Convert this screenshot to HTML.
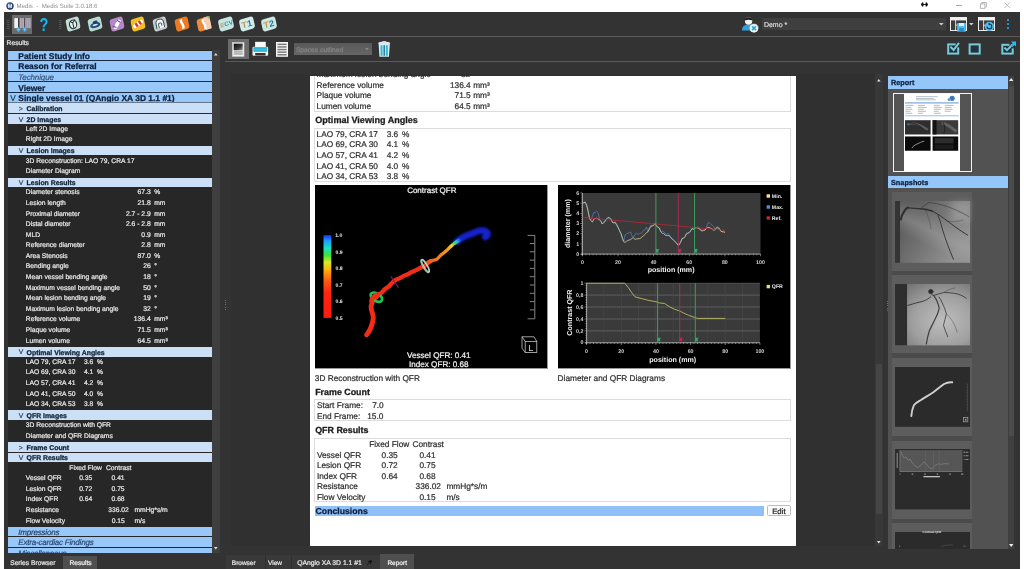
<!DOCTYPE html>
<html><head><meta charset="utf-8"><title>Medis - Medis Suite 3.0.18.6</title>
<style>
html,body{margin:0;padding:0;}
body{width:1024px;height:569px;overflow:hidden;background:#333;position:relative;font-family:'Liberation Sans',sans-serif;text-rendering:geometricPrecision;-webkit-font-smoothing:antialiased;}
.a{position:absolute;}
.t{position:absolute;white-space:pre;line-height:12px;}
.k{-webkit-text-stroke:0.22px currentColor;}
.kb{-webkit-text-stroke:0.28px currentColor;}
svg{position:absolute;overflow:visible;}
</style></head><body>
<div id="app" style="position:absolute;left:0;top:0;width:1024px;height:569px;overflow:hidden;will-change:transform">

<div class="a" style="left:0.00px;top:0.00px;width:1024.00px;height:12.30px;background:#ffffff;"></div>
<div class="a" style="left:0.00px;top:0.00px;width:4.20px;height:569.00px;background:#ffffff;"></div>
<div class="a" style="left:1020.00px;top:0.00px;width:4.00px;height:569.00px;background:#ffffff;"></div>
<svg style="left:6px;top:2.2px" width="8" height="8" viewBox="0 0 8 8"><defs><radialGradient id="tg" cx="0.4" cy="0.35" r="0.7"><stop offset="0" stop-color="#5878b8"/><stop offset="1" stop-color="#142a60"/></radialGradient></defs><circle cx="4" cy="4" r="3.7" fill="url(#tg)"/><text x="4" y="6" font-size="5.5" font-weight="bold" fill="#fff" text-anchor="middle" font-family="Liberation Sans, sans-serif">M</text></svg>
<span class="t k" style="top:1px;font-size:6.12px;color:#8e8e8e;left:16.60px;-webkit-text-stroke:0;">Medis  -  Medis Suite 3.0.18.6</span>
<svg style="left:921px;top:2.4px" width="7" height="5" viewBox="0 0 7 5"><path d="M0 2.5L2 0.6V4.4ZM7 2.5L5 0.6V4.4ZM1.5 2.5H5.5" fill="#111" stroke="#111" stroke-width="0.9"/></svg>
<div class="a" style="left:956.40px;top:4.90px;width:5.80px;height:0.80px;background:#a6a6a6;"></div>
<svg style="left:979.6px;top:2px" width="7" height="7" viewBox="0 0 7 7"><rect x="0.5" y="1.9" width="4.4" height="4.4" fill="none" stroke="#a6a6a6" stroke-width="0.8"/><path d="M1.8 1.9V0.5H6.4V5H4.9" fill="none" stroke="#a6a6a6" stroke-width="0.8"/></svg>
<svg style="left:1003.6px;top:2px" width="7" height="7" viewBox="0 0 7 7"><path d="M0.5 0.5L6 6M6 0.5L0.5 6" stroke="#b0b0b0" stroke-width="0.8"/></svg>
<div class="a" style="left:4.20px;top:12.30px;width:1015.80px;height:24.00px;background:#333333;"></div>
<div class="a" style="left:4.20px;top:36.20px;width:1015.80px;height:0.90px;background:#5a5a5a;"></div>
<svg style="left:6.6px;top:20px" width="3" height="10"><g fill="#545454"><rect x="0" y="0" width="2.4" height="1"/><rect x="0" y="2" width="2.4" height="1"/><rect x="0" y="4" width="2.4" height="1"/><rect x="0" y="6" width="2.4" height="1"/><rect x="0" y="8" width="2.4" height="1"/></g></svg>
<svg style="left:58.6px;top:20px" width="3" height="10"><g fill="#545454"><rect x="0" y="0" width="2.4" height="1"/><rect x="0" y="2" width="2.4" height="1"/><rect x="0" y="4" width="2.4" height="1"/><rect x="0" y="6" width="2.4" height="1"/><rect x="0" y="8" width="2.4" height="1"/></g></svg>
<div class="a" style="left:11.60px;top:14.60px;width:20.30px;height:19.80px;background:#6b6b6b;"></div>
<svg style="left:11.6px;top:14.6px" width="20.3" height="19.8" viewBox="11.6 14.6 20.3 19.8">
<rect x="13.9" y="17.7" width="3.8" height="10" fill="#f2f2f6"/>
<rect x="19.4" y="17.7" width="10.9" height="10" fill="#b4acb8"/>
<path d="M21.6 17.7V27.7M26.4 17.7V27.7M28.4 17.7V27.7" stroke="#8e8894" stroke-width="0.6"/>
<path d="M18.2 17.7V28M24.3 17.7V28" stroke="#3a3a3a" stroke-width="1"/>
<path d="M18.1 26.3L20.6 29.1L18.1 31.9L15.6 29.1Z" fill="#36a6e8"/>
<path d="M24.3 26.3L26.8 29.1L24.3 31.9L21.8 29.1Z" fill="#36a6e8"/>
<circle cx="18.1" cy="29.1" r="1.1" fill="#7ad0ff"/><circle cx="24.3" cy="29.1" r="1" fill="#7ad0ff"/>
</svg>
<span class="t" style="left:33.7px;width:20px;text-align:center;top:14px;font-size:18.6px;line-height:22px;color:#22b4e4;font-weight:bold;transform:scaleX(0.78);text-shadow:0.6px 0.6px 0 #123a6a">?</span>
<svg style="left:62.3px;top:13px" width="22" height="22" viewBox="-11 -11 22 22"><g transform="matrix(0.83,-0.25,0.17,0.79,0,0)"><rect x="-7.8" y="-7.8" width="15.6" height="15.6" rx="3.4" fill="#c2ddd2"/><ellipse cx="0" cy="0.5" rx="4.2" ry="5.2" fill="#e9f3ee" stroke="#25303a" stroke-width="1.3"/><path d="M-2.5 -4.5C-1 -1 1 -1 3 -5M0 -2V5" stroke="#25303a" stroke-width="1.2" fill="none"/></g></svg>
<svg style="left:84.2px;top:13px" width="22" height="22" viewBox="-11 -11 22 22"><g transform="matrix(0.83,-0.25,0.17,0.79,0,0)"><rect x="-7.8" y="-7.8" width="15.6" height="15.6" rx="3.4" fill="#badbcf"/><ellipse cx="0" cy="1.5" rx="6" ry="3.2" fill="#2a4a86"/><ellipse cx="0.5" cy="-1.5" rx="3" ry="2.4" fill="#1e3a78"/><ellipse cx="0" cy="1.2" rx="3.2" ry="1.1" fill="#dfeee8"/></g></svg>
<svg style="left:105.7px;top:13px" width="22" height="22" viewBox="-11 -11 22 22"><g transform="matrix(0.83,-0.25,0.17,0.79,0,0)"><rect x="-7.8" y="-7.8" width="15.6" height="15.6" rx="3.4" fill="#b487c6"/><path d="M-5 4.6L-1.6 -1L3 -5L5.6 -2.4L1.6 2L-2 6Z" fill="#fff"/><path d="M-5.4 1L-1.5 4M1 -4.4L4.4 -0.5" stroke="#6a3a88" stroke-width="1.1"/></g></svg>
<svg style="left:127.4px;top:13px" width="22" height="22" viewBox="-11 -11 22 22"><g transform="matrix(0.83,-0.25,0.17,0.79,0,0)"><rect x="-7.8" y="-7.8" width="15.6" height="15.6" rx="3.4" fill="#f3c11e"/><g transform="rotate(-20)"><rect x="-6.5" y="-2.6" width="13" height="5.2" rx="2.6" fill="#fff"/><rect x="-3.2" y="-2.6" width="2.6" height="5.2" fill="#d8322a"/><rect x="1.4" y="-2.6" width="2.6" height="5.2" fill="#d8322a"/></g></g></svg>
<svg style="left:149.3px;top:13px" width="22" height="22" viewBox="-11 -11 22 22"><g transform="matrix(0.83,-0.25,0.17,0.79,0,0)"><rect x="-7.8" y="-7.8" width="15.6" height="15.6" rx="3.4" fill="#c3cdcd"/><path d="M-4.5 5V-1.5A4.5 4.5 0 0 1 4.5 -1.5V5" fill="#f4f6f6" stroke="#3c4c58" stroke-width="1.2"/><path d="M-1.8 5V0.5A1.8 1.8 0 0 1 1.8 0.5V2.5" fill="none" stroke="#3c4c58" stroke-width="1.1"/></g></svg>
<svg style="left:171.2px;top:13px" width="22" height="22" viewBox="-11 -11 22 22"><g transform="matrix(0.83,-0.25,0.17,0.79,0,0)"><rect x="-7.8" y="-7.8" width="15.6" height="15.6" rx="3.4" fill="#ec7a22"/><path d="M-1.5 -6C-3.5 -2 1 0 -1 6L2 6C3.8 0 -0.5 -2 1.5 -6Z" fill="#fff"/></g></svg>
<svg style="left:193.2px;top:13px" width="22" height="22" viewBox="-11 -11 22 22"><g transform="matrix(0.83,-0.25,0.17,0.79,0,0)"><rect x="-7.8" y="-7.8" width="15.6" height="15.6" rx="3.4" fill="#ee8a3c"/><rect x="0.6" y="-7.8" width="7.2" height="15.6" fill="#f4cdb6"/><path d="M4 -7.8H7.8V-4Z" fill="#7cb85c"/><path d="M-1.6 -6.4C-3.6 -2 1 0 -1 6.6L1.8 6.6C3.6 0 -0.8 -2 1.2 -6.4Z" fill="#fff"/></g></svg>
<svg style="left:214.7px;top:13px" width="22" height="22" viewBox="-11 -11 22 22"><g transform="matrix(0.83,-0.25,0.17,0.79,0,0)"><rect x="-8.5" y="-7.5" width="17" height="15" rx="3.4" fill="#c6e6e4"/><text x="-7" y="2.6" font-size="7.4" font-weight="bold" fill="#c8a060" font-family="Liberation Sans, sans-serif">E<tspan fill="#3a88a8">CV</tspan></text></g></svg>
<svg style="left:236.1px;top:13px" width="22" height="22" viewBox="-11 -11 22 22"><g transform="matrix(0.83,-0.25,0.17,0.79,0,0)"><rect x="-8.5" y="-7.5" width="17" height="15" rx="3.4" fill="#d2ecea"/><text x="-6.4" y="3.8" font-size="10.6" font-weight="bold" fill="#c89858" font-family="Liberation Sans, sans-serif">T<tspan fill="#2a74a4">1</tspan></text></g></svg>
<svg style="left:257.8px;top:13px" width="22" height="22" viewBox="-11 -11 22 22"><g transform="matrix(0.83,-0.25,0.17,0.79,0,0)"><rect x="-8.5" y="-7.5" width="17" height="15" rx="3.4" fill="#cce8de"/><text x="-6.4" y="3.8" font-size="10.6" font-weight="bold" fill="#c89858" font-family="Liberation Sans, sans-serif">T<tspan fill="#2a74a4">2</tspan></text></g></svg>
<svg style="left:741px;top:16px" width="18" height="17" viewBox="0 0 18 17">
<path d="M1 14.5C1 10 4 8.6 7.6 8.6C11.2 8.6 14 10 14 14.5Z" fill="#2f9fe0"/>
<circle cx="7.6" cy="5" r="3.7" fill="#f2f2f2"/>
<path d="M3.7 4.6C3.7 0.2 11.5 0.2 11.5 4.6C9.5 3.6 6 3.6 3.7 4.6Z" fill="#1c1c1c"/>
<circle cx="13" cy="12.2" r="4" fill="#e4f4fa" stroke="#ffffff" stroke-width="0.8"/>
<path d="M11.1 10.3L14.9 14.1M14.9 10.3L11.1 14.1" stroke="#2aa6cc" stroke-width="1.5"/>
</svg>
<div class="a" style="left:761.60px;top:18.40px;width:184.00px;height:11.20px;background:#3f3f3f;"></div>
<span class="t k" style="top:20px;font-size:6.95px;color:#d8d8d8;left:764.00px;">Demo *</span>
<svg style="left:939px;top:23px" width="5" height="3"><path d="M0 0H4.6L2.3 2.6Z" fill="#ccc"/></svg>
<svg style="left:949.5px;top:16.5px" width="17" height="15" viewBox="0 0 17 15">
<rect x="0.5" y="0.5" width="16" height="13" fill="#3c3c3c" stroke="#ececec" stroke-width="1"/>
<rect x="1" y="1" width="15" height="2.4" fill="#f0f0f0"/>
<path d="M5.6 3V13.5M5.6 8.2H16" stroke="#ececec" stroke-width="0.9" fill="none"/>
<rect x="7.2" y="6" width="8.6" height="8.6" fill="#4fbff0"/>
<rect x="9" y="6" width="5" height="3" fill="#dff0fb"/>
<rect x="9.2" y="11" width="4.6" height="3.6" fill="#2a8ac0"/>
</svg>
<svg style="left:969px;top:23px" width="5" height="3"><path d="M0 0H4.6L2.3 2.6Z" fill="#ccc"/></svg>
<svg style="left:978px;top:16.5px" width="17" height="15" viewBox="0 0 17 15">
<rect x="0.5" y="0.5" width="16" height="13" fill="#3c3c3c" stroke="#ececec" stroke-width="1"/>
<rect x="1" y="1" width="15" height="2.4" fill="#f0f0f0"/>
<path d="M5.6 3V13.5M5.6 8.2H16" stroke="#ececec" stroke-width="0.9" fill="none"/>
<circle cx="11.4" cy="9.4" r="4.6" fill="#4fbff0"/>
<path d="M9 9.4A2.4 2.4 0 1 0 11.4 7" fill="none" stroke="#1a3c54" stroke-width="1.2"/>
<path d="M11.8 5.5L9.8 7.1L11.8 8.5Z" fill="#1a3c54"/>
</svg>
<div class="a" style="left:1006.60px;top:19.30px;width:2.20px;height:2.20px;background:#2f9fe0;border-radius:0.4px;"></div>
<div class="a" style="left:1006.60px;top:23.10px;width:2.20px;height:2.20px;background:#2f9fe0;border-radius:0.4px;"></div>
<div class="a" style="left:1006.60px;top:26.90px;width:2.20px;height:2.20px;background:#2f9fe0;border-radius:0.4px;"></div>
<div class="a" style="left:4.20px;top:37.10px;width:1015.80px;height:24.30px;background:#333333;"></div>
<div class="a" style="left:224.50px;top:61.30px;width:795.50px;height:0.90px;background:#5a5a5a;"></div>
<span class="t k" style="top:38px;font-size:6.7px;color:#e6e6e6;left:6.60px;">Results</span>
<div class="a" style="left:228.00px;top:39.20px;width:21.00px;height:20.30px;background:#6b6b6b;"></div>
<svg style="left:232.2px;top:41.6px" width="12.4" height="14.9" viewBox="0 0 13 15.4">
<rect x="0.4" y="0.4" width="12.2" height="14.6" fill="#f4f4f4" stroke="#d0d0d0" stroke-width="0.6"/>
<defs><linearGradient id="gi" x1="0" y1="0" x2="1" y2="1"><stop offset="0" stop-color="#0a0a0a"/><stop offset="0.6" stop-color="#3a3a3a"/><stop offset="1" stop-color="#9a9a9a"/></linearGradient></defs>
<rect x="1.8" y="1.6" width="9.4" height="7" fill="url(#gi)"/>
<rect x="1.8" y="9.8" width="9.4" height="1.1" fill="#888"/>
<rect x="1.8" y="11.9" width="9.4" height="1.1" fill="#888"/>
</svg>
<svg style="left:252px;top:41px" width="17" height="16" viewBox="252 41 17 16">
<defs><linearGradient id="pc" x1="0" y1="0" x2="0" y2="1"><stop offset="0" stop-color="#1a9cc8"/><stop offset="0.55" stop-color="#3cc4e6"/><stop offset="1" stop-color="#1f9fcc"/></linearGradient></defs>
<rect x="255.1" y="41.8" width="10.7" height="5.6" fill="#f6fafa"/>
<rect x="252.5" y="46.8" width="15.6" height="8.9" rx="1.2" fill="#f4f8f8"/>
<rect x="253.3" y="47.2" width="14" height="4.5" rx="0.8" fill="url(#pc)"/>
<rect x="255.2" y="53" width="10.4" height="2.5" fill="#3a2f2f"/>
</svg>
<svg style="left:276.2px;top:41.6px" width="12" height="15" viewBox="0 0 12 15">
<rect x="0" y="0" width="12" height="14.8" fill="#f6f6f6"/>
<g fill="#7c7c7c"><rect x="1.4" y="1.6" width="9.2" height="1.5"/><rect x="1.4" y="4.2" width="9.2" height="1.5"/><rect x="1.4" y="6.8" width="9.2" height="1.5"/><rect x="1.4" y="9.4" width="9.2" height="1.5"/><rect x="1.4" y="12" width="9.2" height="1.5"/></g>
</svg>
<div class="a" style="left:294.00px;top:43.40px;width:78.00px;height:11.50px;background:linear-gradient(#595959,#666666);"></div>
<span class="t k" style="top:45px;font-size:6.65px;color:#858585;left:295.90px;">Spaces outlined</span>
<svg style="left:364.6px;top:48.4px" width="5" height="3"><path d="M0 0H3.8L1.9 2.2Z" fill="#8a8a8a"/></svg>
<svg style="left:377.8px;top:41.2px" width="12.4" height="16" viewBox="0 0 12.4 16">
<ellipse cx="6.2" cy="2.2" rx="6" ry="1.7" fill="#e2e6e8"/>
<rect x="4.4" y="0" width="3.6" height="1.4" fill="#cfd4d6"/>
<path d="M0.6 3H11.8L11 15.8H1.4Z" fill="#d4eef6"/>
<rect x="2.6" y="4.2" width="1.9" height="10.6" fill="#2fb6d8"/>
<rect x="7.9" y="4.2" width="1.9" height="10.6" fill="#2fb6d8"/>
<rect x="5.5" y="4.2" width="1.4" height="10.6" fill="#2a6e90"/>
</svg>
<svg style="left:946px;top:41px" width="16" height="16" viewBox="946 41 16 16">
<rect x="948.2" y="44.4" width="10" height="9.2" fill="#27303c" stroke="#74ccd8" stroke-width="2"/>
<rect x="955.6" y="42" width="5" height="5.4" fill="#333333"/>
<path d="M950.4 46.8L953.6 50L959 42.8" fill="none" stroke="#74ccd8" stroke-width="2"/>
</svg>
<svg style="left:967px;top:41px" width="16" height="16" viewBox="967 41 16 16">
<rect x="969.6" y="44.4" width="10.1" height="9.2" fill="#27303c" stroke="#74ccd8" stroke-width="2"/>
</svg>
<svg style="left:1000px;top:40px" width="18" height="17" viewBox="1000 40 18 17">
<rect x="1002.3" y="44.8" width="10.4" height="8.8" fill="#27303c" stroke="#74ccd8" stroke-width="2"/>
<rect x="1009.4" y="42" width="6" height="6.4" fill="#333333"/>
<path d="M1004.4 47.6L1007 50.2L1012.4 44.6" fill="none" stroke="#74ccd8" stroke-width="1.9"/>
<path d="M1011 41.6H1016V46.6L1014.3 44.9L1012.2 47L1010.6 45.4L1012.7 43.3Z" fill="#34b8e2"/>
</svg>
<div class="a" style="left:7.80px;top:50.20px;width:204.40px;height:503.20px;background:#272727;"></div>
<div class="a" style="left:7.80px;top:50.50px;width:204.40px;height:52.60px;background:#1a2a40;"></div>
<div class="a" style="left:7.80px;top:50.50px;width:204.40px;height:9.50px;background:#98c8fa;"></div>
<span class="t kb" style="top:50px;font-size:8.45px;color:#0d2240;left:18.30px;font-weight:bold;">Patient Study Info</span>
<div class="a" style="left:7.80px;top:61.09px;width:204.40px;height:9.50px;background:#98c8fa;"></div>
<span class="t kb" style="top:60px;font-size:8.45px;color:#0d2240;left:18.30px;font-weight:bold;">Reason for Referral</span>
<div class="a" style="left:7.80px;top:71.68px;width:204.40px;height:9.50px;background:#98c8fa;"></div>
<span class="t k" style="top:72px;font-size:8.0px;color:#3a5880;left:18.30px;font-style:italic;letter-spacing:-0.12px;">Technique</span>
<div class="a" style="left:7.80px;top:82.26px;width:204.40px;height:9.50px;background:#98c8fa;"></div>
<span class="t kb" style="top:82px;font-size:8.45px;color:#0d2240;left:18.30px;font-weight:bold;">Viewer</span>
<div class="a" style="left:7.80px;top:92.85px;width:204.40px;height:9.50px;background:#98c8fa;"></div>
<span class="t k" style="top:93px;font-size:8.2px;color:#1f3a5c;left:10.30px;">V</span>
<span class="t kb" style="top:92px;font-size:8.45px;color:#0d2240;left:18.30px;font-weight:bold;">Single vessel 01 (QAngio XA 3D 1.1 #1)</span>
<div class="a" style="left:7.80px;top:102.35px;width:204.40px;height:1.10px;background:#66788c;"></div>
<div class="a" style="left:7.80px;top:103.44px;width:204.40px;height:9.60px;background:#cbdff6;"></div>
<span class="t k" style="top:104px;font-size:6.8px;color:#2c4763;left:18.80px;">&gt;</span>
<span class="t kb" style="top:104px;font-size:6.9px;color:#13253a;left:26.60px;font-weight:bold;">Calibration</span>
<div class="a" style="left:7.80px;top:114.03px;width:204.40px;height:9.60px;background:#cbdff6;"></div>
<span class="t k" style="top:115px;font-size:6.8px;color:#2c4763;left:18.80px;">V</span>
<span class="t kb" style="top:115px;font-size:6.9px;color:#13253a;left:26.60px;font-weight:bold;">2D Images</span>
<span class="t k" style="top:124px;font-size:6.72px;color:#e6e6e6;left:25.80px;">Left 2D Image</span>
<span class="t k" style="top:134px;font-size:6.72px;color:#e6e6e6;left:25.80px;">Right 2D Image</span>
<div class="a" style="left:7.80px;top:145.79px;width:204.40px;height:9.60px;background:#cbdff6;"></div>
<span class="t k" style="top:146px;font-size:6.8px;color:#2c4763;left:18.80px;">V</span>
<span class="t kb" style="top:146px;font-size:6.9px;color:#13253a;left:26.60px;font-weight:bold;">Lesion Images</span>
<span class="t k" style="top:156px;font-size:6.72px;color:#e6e6e6;left:25.80px;">3D Reconstruction: LAO 79, CRA 17</span>
<span class="t k" style="top:166px;font-size:6.72px;color:#e6e6e6;left:25.80px;">Diameter Diagram</span>
<div class="a" style="left:7.80px;top:177.56px;width:204.40px;height:9.60px;background:#cbdff6;"></div>
<span class="t k" style="top:178px;font-size:6.8px;color:#2c4763;left:18.80px;">V</span>
<span class="t kb" style="top:178px;font-size:6.9px;color:#13253a;left:26.60px;font-weight:bold;">Lesion Results</span>
<span class="t k" style="top:187px;font-size:6.72px;color:#e6e6e6;left:25.80px;">Diameter stenosis</span>
<span class="t k" style="top:187px;font-size:6.8px;color:#e6e6e6;right:873.20px;">67.3</span>
<span class="t k" style="top:187px;font-size:6.72px;color:#e6e6e6;left:154.20px;">%</span>
<span class="t k" style="top:198px;font-size:6.72px;color:#e6e6e6;left:25.80px;">Lesion length</span>
<span class="t k" style="top:198px;font-size:6.8px;color:#e6e6e6;right:873.20px;">21.8</span>
<span class="t k" style="top:198px;font-size:6.72px;color:#e6e6e6;left:154.20px;">mm</span>
<span class="t k" style="top:209px;font-size:6.72px;color:#e6e6e6;left:25.80px;">Proximal diameter</span>
<span class="t k" style="top:209px;font-size:6.8px;color:#e6e6e6;right:873.20px;">2.7 - 2.9</span>
<span class="t k" style="top:209px;font-size:6.72px;color:#e6e6e6;left:154.20px;">mm</span>
<span class="t k" style="top:219px;font-size:6.72px;color:#e6e6e6;left:25.80px;">Distal diameter</span>
<span class="t k" style="top:219px;font-size:6.8px;color:#e6e6e6;right:873.20px;">2.6 - 2.8</span>
<span class="t k" style="top:219px;font-size:6.72px;color:#e6e6e6;left:154.20px;">mm</span>
<span class="t k" style="top:230px;font-size:6.72px;color:#e6e6e6;left:25.80px;">MLD</span>
<span class="t k" style="top:230px;font-size:6.8px;color:#e6e6e6;right:873.20px;">0.9</span>
<span class="t k" style="top:230px;font-size:6.72px;color:#e6e6e6;left:154.20px;">mm</span>
<span class="t k" style="top:240px;font-size:6.72px;color:#e6e6e6;left:25.80px;">Reference diameter</span>
<span class="t k" style="top:240px;font-size:6.8px;color:#e6e6e6;right:873.20px;">2.8</span>
<span class="t k" style="top:240px;font-size:6.72px;color:#e6e6e6;left:154.20px;">mm</span>
<span class="t k" style="top:251px;font-size:6.72px;color:#e6e6e6;left:25.80px;">Area Stenosis</span>
<span class="t k" style="top:251px;font-size:6.8px;color:#e6e6e6;right:873.20px;">87.0</span>
<span class="t k" style="top:251px;font-size:6.72px;color:#e6e6e6;left:154.20px;">%</span>
<span class="t k" style="top:261px;font-size:6.72px;color:#e6e6e6;left:25.80px;">Bending angle</span>
<span class="t k" style="top:261px;font-size:6.8px;color:#e6e6e6;right:873.20px;">26</span>
<span class="t k" style="top:261px;font-size:6.72px;color:#e6e6e6;left:154.20px;">°</span>
<span class="t k" style="top:272px;font-size:6.72px;color:#e6e6e6;left:25.80px;">Mean vessel bending angle</span>
<span class="t k" style="top:272px;font-size:6.8px;color:#e6e6e6;right:873.20px;">18</span>
<span class="t k" style="top:272px;font-size:6.72px;color:#e6e6e6;left:154.20px;">°</span>
<span class="t k" style="top:283px;font-size:6.72px;color:#e6e6e6;left:25.80px;">Maximum vessel bending angle</span>
<span class="t k" style="top:283px;font-size:6.8px;color:#e6e6e6;right:873.20px;">50</span>
<span class="t k" style="top:283px;font-size:6.72px;color:#e6e6e6;left:154.20px;">°</span>
<span class="t k" style="top:293px;font-size:6.72px;color:#e6e6e6;left:25.80px;">Mean lesion bending angle</span>
<span class="t k" style="top:293px;font-size:6.8px;color:#e6e6e6;right:873.20px;">19</span>
<span class="t k" style="top:293px;font-size:6.72px;color:#e6e6e6;left:154.20px;">°</span>
<span class="t k" style="top:304px;font-size:6.72px;color:#e6e6e6;left:25.80px;">Maximum lesion bending angle</span>
<span class="t k" style="top:304px;font-size:6.8px;color:#e6e6e6;right:873.20px;">32</span>
<span class="t k" style="top:304px;font-size:6.72px;color:#e6e6e6;left:154.20px;">°</span>
<span class="t k" style="top:314px;font-size:6.72px;color:#e6e6e6;left:25.80px;">Reference volume</span>
<span class="t k" style="top:314px;font-size:6.8px;color:#e6e6e6;right:873.20px;">136.4</span>
<span class="t k" style="top:314px;font-size:6.72px;color:#e6e6e6;left:154.20px;">mm³</span>
<span class="t k" style="top:325px;font-size:6.72px;color:#e6e6e6;left:25.80px;">Plaque volume</span>
<span class="t k" style="top:325px;font-size:6.8px;color:#e6e6e6;right:873.20px;">71.5</span>
<span class="t k" style="top:325px;font-size:6.72px;color:#e6e6e6;left:154.20px;">mm³</span>
<span class="t k" style="top:336px;font-size:6.72px;color:#e6e6e6;left:25.80px;">Lumen volume</span>
<span class="t k" style="top:336px;font-size:6.8px;color:#e6e6e6;right:873.20px;">64.5</span>
<span class="t k" style="top:336px;font-size:6.72px;color:#e6e6e6;left:154.20px;">mm³</span>
<div class="a" style="left:7.80px;top:346.96px;width:204.40px;height:9.60px;background:#cbdff6;"></div>
<span class="t k" style="top:347px;font-size:6.8px;color:#2c4763;left:18.80px;">V</span>
<span class="t kb" style="top:348px;font-size:6.9px;color:#13253a;left:26.60px;font-weight:bold;">Optimal Viewing Angles</span>
<span class="t k" style="top:357px;font-size:6.72px;color:#e6e6e6;left:25.80px;">LAO 79, CRA 17</span>
<span class="t k" style="top:357px;font-size:6.72px;color:#e6e6e6;left:84.00px;">3.6</span>
<span class="t k" style="top:357px;font-size:6.72px;color:#e6e6e6;left:97.00px;">%</span>
<span class="t k" style="top:367px;font-size:6.72px;color:#e6e6e6;left:25.80px;">LAO 69, CRA 30</span>
<span class="t k" style="top:367px;font-size:6.72px;color:#e6e6e6;left:84.00px;">4.1</span>
<span class="t k" style="top:367px;font-size:6.72px;color:#e6e6e6;left:97.00px;">%</span>
<span class="t k" style="top:378px;font-size:6.72px;color:#e6e6e6;left:25.80px;">LAO 57, CRA 41</span>
<span class="t k" style="top:378px;font-size:6.72px;color:#e6e6e6;left:84.00px;">4.2</span>
<span class="t k" style="top:378px;font-size:6.72px;color:#e6e6e6;left:97.00px;">%</span>
<span class="t k" style="top:389px;font-size:6.72px;color:#e6e6e6;left:25.80px;">LAO 41, CRA 50</span>
<span class="t k" style="top:389px;font-size:6.72px;color:#e6e6e6;left:84.00px;">4.0</span>
<span class="t k" style="top:389px;font-size:6.72px;color:#e6e6e6;left:97.00px;">%</span>
<span class="t k" style="top:399px;font-size:6.72px;color:#e6e6e6;left:25.80px;">LAO 34, CRA 53</span>
<span class="t k" style="top:399px;font-size:6.72px;color:#e6e6e6;left:84.00px;">3.8</span>
<span class="t k" style="top:399px;font-size:6.72px;color:#e6e6e6;left:97.00px;">%</span>
<div class="a" style="left:7.80px;top:410.49px;width:204.40px;height:9.60px;background:#cbdff6;"></div>
<span class="t k" style="top:411px;font-size:6.8px;color:#2c4763;left:18.80px;">V</span>
<span class="t kb" style="top:411px;font-size:6.9px;color:#13253a;left:26.60px;font-weight:bold;">QFR Images</span>
<span class="t k" style="top:420px;font-size:6.72px;color:#e6e6e6;left:25.80px;">3D Reconstruction with QFR</span>
<span class="t k" style="top:431px;font-size:6.72px;color:#e6e6e6;left:25.80px;">Diameter and QFR Diagrams</span>
<div class="a" style="left:7.80px;top:442.26px;width:204.40px;height:9.60px;background:#cbdff6;"></div>
<span class="t k" style="top:443px;font-size:6.8px;color:#2c4763;left:18.80px;">&gt;</span>
<span class="t kb" style="top:443px;font-size:6.9px;color:#13253a;left:26.60px;font-weight:bold;">Frame Count</span>
<div class="a" style="left:7.80px;top:452.84px;width:204.40px;height:9.60px;background:#cbdff6;"></div>
<span class="t k" style="top:453px;font-size:6.8px;color:#2c4763;left:18.80px;">V</span>
<span class="t kb" style="top:453px;font-size:6.9px;color:#13253a;left:26.60px;font-weight:bold;">QFR Results</span>
<span class="t k" style="top:463px;font-size:6.72px;color:#e6e6e6;left:69.30px;">Fixed Flow</span>
<span class="t k" style="top:463px;font-size:6.72px;color:#e6e6e6;left:106.00px;">Contrast</span>
<span class="t k" style="top:473px;font-size:6.72px;color:#e6e6e6;left:25.80px;">Vessel QFR</span>
<span class="t k" style="top:473px;font-size:6.72px;color:#e6e6e6;right:931.80px;">0.35</span>
<span class="t k" style="top:473px;font-size:6.72px;color:#e6e6e6;right:899.40px;">0.41</span>
<span class="t k" style="top:484px;font-size:6.72px;color:#e6e6e6;left:25.80px;">Lesion QFR</span>
<span class="t k" style="top:484px;font-size:6.72px;color:#e6e6e6;right:931.80px;">0.72</span>
<span class="t k" style="top:484px;font-size:6.72px;color:#e6e6e6;right:899.40px;">0.75</span>
<span class="t k" style="top:494px;font-size:6.72px;color:#e6e6e6;left:25.80px;">Index QFR</span>
<span class="t k" style="top:494px;font-size:6.72px;color:#e6e6e6;right:931.80px;">0.64</span>
<span class="t k" style="top:494px;font-size:6.72px;color:#e6e6e6;right:899.40px;">0.68</span>
<span class="t k" style="top:505px;font-size:6.72px;color:#e6e6e6;left:25.80px;">Resistance</span>
<span class="t k" style="top:505px;font-size:6.72px;color:#e6e6e6;right:895.20px;">336.02</span>
<span class="t k" style="top:505px;font-size:6.72px;color:#e6e6e6;left:134.50px;">mmHg*s/m</span>
<span class="t k" style="top:516px;font-size:6.72px;color:#e6e6e6;left:25.80px;">Flow Velocity</span>
<span class="t k" style="top:516px;font-size:6.72px;color:#e6e6e6;right:899.20px;">0.15</span>
<span class="t k" style="top:516px;font-size:6.72px;color:#e6e6e6;left:134.50px;">m/s</span>
<div class="a" style="left:7.80px;top:526.60px;width:204.40px;height:9.50px;background:#98c8fa;"></div>
<span class="t k" style="top:527px;font-size:8.0px;color:#2c4a74;left:18.30px;font-style:italic;letter-spacing:-0.2px;">Impressions</span>
<div class="a" style="left:7.80px;top:537.30px;width:204.40px;height:9.50px;background:#98c8fa;"></div>
<span class="t k" style="top:537px;font-size:8.0px;color:#2c4a74;left:18.30px;font-style:italic;letter-spacing:-0.2px;">Extra-cardiac Findings</span>
<div class="a" style="left:7.80px;top:548.00px;width:204.40px;height:5.40px;background:#98c8fa;"></div>
<span class="t k" style="top:548px;font-size:8.0px;color:#2c4a74;left:18.30px;font-style:italic;letter-spacing:-0.2px;">Miscellaneous</span>
<div class="a" style="left:212.40px;top:50.20px;width:7.70px;height:503.20px;background:#3f3f3f;"></div>
<svg style="left:214.2px;top:52.6px" width="5" height="4"><path d="M0 2.4L1.8 0L3.6 2.4Z" fill="#e0e0e0"/></svg>
<svg style="left:214.2px;top:546.6px" width="5" height="4"><path d="M0 0L1.8 2.4L3.6 0Z" fill="#e0e0e0"/></svg>
<div class="a" style="left:224.90px;top:300.00px;width:0.80px;height:1.10px;background:#6e6e6e;"></div>
<div class="a" style="left:224.90px;top:302.20px;width:0.80px;height:1.10px;background:#6e6e6e;"></div>
<div class="a" style="left:224.90px;top:304.40px;width:0.80px;height:1.10px;background:#6e6e6e;"></div>
<div class="a" style="left:224.90px;top:306.60px;width:0.80px;height:1.10px;background:#6e6e6e;"></div>
<div class="a" style="left:224.90px;top:308.80px;width:0.80px;height:1.10px;background:#6e6e6e;"></div>
<div class="a" style="left:4.20px;top:553.40px;width:1015.80px;height:15.60px;background:#333333;"></div>
<span class="t k" style="top:558px;font-size:6.7px;color:#e6e6e6;left:10.20px;">Series Browser</span>
<div class="a" style="left:62.80px;top:556.00px;width:34.40px;height:13.00px;background:#4f4f4f;"></div>
<span class="t k" style="top:558px;font-size:6.7px;color:#f0f0f0;left:69.40px;">Results</span>
<div class="a" style="left:231.00px;top:73.60px;width:644.00px;height:472.40px;background:#303030;"></div>
<div class="a" style="left:310.40px;top:75.50px;width:486.00px;height:470.50px;background:#ffffff;"></div>
<div class="a" style="left:314px;top:75.5px;width:477.20000000000005px;height:36.099999999999994px;border:0.8px solid #dcdcdc;border-top:none;box-sizing:border-box"></div>
<span class="t k" style="top:68px;font-size:8.3px;color:#303030;left:316.60px;">Maximum lesion bending angle</span>
<span class="t k" style="top:68px;font-size:8.3px;color:#303030;left:461.00px;">32</span>
<span class="t k" style="top:68px;font-size:8.3px;color:#303030;left:473.20px;">°</span>
<div class="a" style="left:300.00px;top:62.20px;width:520.00px;height:12.80px;background:#333333;"></div>
<div class="a" style="left:231.00px;top:73.60px;width:644.00px;height:1.90px;background:#303030;"></div>
<span class="t k" style="top:79px;font-size:8.3px;color:#303030;left:316.60px;">Reference volume</span>
<span class="t k" style="top:79px;font-size:8.3px;color:#303030;right:553.30px;">136.4</span>
<span class="t k" style="top:79px;font-size:8.3px;color:#303030;left:473.20px;">mm³</span>
<span class="t k" style="top:89px;font-size:8.3px;color:#303030;left:316.60px;">Plaque volume</span>
<span class="t k" style="top:89px;font-size:8.3px;color:#303030;right:553.30px;">71.5</span>
<span class="t k" style="top:89px;font-size:8.3px;color:#303030;left:473.20px;">mm³</span>
<span class="t k" style="top:100px;font-size:8.3px;color:#303030;left:316.60px;">Lumen volume</span>
<span class="t k" style="top:100px;font-size:8.3px;color:#303030;right:553.30px;">64.5</span>
<span class="t k" style="top:100px;font-size:8.3px;color:#303030;left:473.20px;">mm³</span>
<span class="t kb" style="top:114px;font-size:9.05px;color:#1c1c1c;left:315.30px;font-weight:bold;">Optimal Viewing Angles</span>
<div class="a" style="left:314px;top:128px;width:477.20000000000005px;height:54.19999999999999px;border:0.8px solid #dcdcdc;box-sizing:border-box"></div>
<span class="t k" style="top:128px;font-size:8.3px;color:#303030;left:316.60px;">LAO 79, CRA 17</span>
<span class="t k" style="top:128px;font-size:8.3px;color:#303030;left:386.70px;">3.6</span>
<span class="t k" style="top:128px;font-size:8.3px;color:#303030;left:402.00px;">%</span>
<span class="t k" style="top:138px;font-size:8.3px;color:#303030;left:316.60px;">LAO 69, CRA 30</span>
<span class="t k" style="top:138px;font-size:8.3px;color:#303030;left:386.70px;">4.1</span>
<span class="t k" style="top:138px;font-size:8.3px;color:#303030;left:402.00px;">%</span>
<span class="t k" style="top:149px;font-size:8.3px;color:#303030;left:316.60px;">LAO 57, CRA 41</span>
<span class="t k" style="top:149px;font-size:8.3px;color:#303030;left:386.70px;">4.2</span>
<span class="t k" style="top:149px;font-size:8.3px;color:#303030;left:402.00px;">%</span>
<span class="t k" style="top:160px;font-size:8.3px;color:#303030;left:316.60px;">LAO 41, CRA 50</span>
<span class="t k" style="top:160px;font-size:8.3px;color:#303030;left:386.70px;">4.0</span>
<span class="t k" style="top:160px;font-size:8.3px;color:#303030;left:402.00px;">%</span>
<span class="t k" style="top:170px;font-size:8.3px;color:#303030;left:316.60px;">LAO 34, CRA 53</span>
<span class="t k" style="top:170px;font-size:8.3px;color:#303030;left:386.70px;">3.8</span>
<span class="t k" style="top:170px;font-size:8.3px;color:#303030;left:402.00px;">%</span>
<div class="a" style="left:314.60px;top:184.60px;width:233.50px;height:184.30px;background:#9a9a9a;"></div>
<div class="a" style="left:315.40px;top:185.40px;width:231.90px;height:182.70px;background:#000000;"></div>
<span class="t k" style="top:185px;font-size:8.0px;color:#f4f4f4;left:281.80px;width:300px;text-align:center;">Contrast QFR</span>
<svg style="left:315.4px;top:185.4px" width="231.89999999999998" height="182.70000000000002" viewBox="315.4 185.4 231.89999999999998 182.70000000000002">
<defs>
<linearGradient id="cb" x1="0" y1="0" x2="0" y2="1">
<stop offset="0" stop-color="#1a2cff"/><stop offset="0.07" stop-color="#1aa0ff"/><stop offset="0.16" stop-color="#19e0c0"/><stop offset="0.24" stop-color="#3be03a"/>
<stop offset="0.33" stop-color="#d8e820"/><stop offset="0.42" stop-color="#ffb010"/><stop offset="0.55" stop-color="#ff5a10"/><stop offset="0.7" stop-color="#ff2410"/><stop offset="1" stop-color="#ff1a10"/>
</linearGradient>
<linearGradient id="vs" gradientUnits="userSpaceOnUse" x1="426" y1="266" x2="461" y2="239">
<stop offset="0" stop-color="#f22c18"/><stop offset="0.1" stop-color="#f3541a"/><stop offset="0.3" stop-color="#f4781c"/><stop offset="0.62" stop-color="#f59a1c"/><stop offset="0.75" stop-color="#f2dc20"/><stop offset="0.83" stop-color="#48d860"/><stop offset="0.9" stop-color="#20b4e0"/><stop offset="1" stop-color="#1428d8"/>
</linearGradient>
<filter id="bl" x="-20%" y="-50%" width="140%" height="200%"><feGaussianBlur stdDeviation="0.9"/></filter>
</defs>
<rect x="323.9" y="235.5" width="7.8" height="82.8" fill="url(#cb)"/>
<g font-family="Liberation Sans, sans-serif" font-size="5.1" font-weight="bold" fill="#f0f0f0">
<text x="335.6" y="237.4">1.0</text><text x="336" y="254">0.9</text><text x="336" y="270.6">0.8</text><text x="336" y="287.2">0.7</text><text x="336" y="303.8">0.6</text><text x="336" y="320.4">0.5</text>
</g>
<g fill="none" stroke="url(#vs)" stroke-linecap="round" stroke-linejoin="round">
<path d="M367.1 335.3 C369.6 332 372.8 326 373.6 319 C374.2 314 370.8 311 371.6 306.4 C372.2 302.4 374 299.4 377 296.9" stroke-width="4.9"/>
<path d="M377 296.9 C380 294.2 381.6 294 383.6 291.4 C385.4 288.6 388 288.4 390.1 285.9 C391.6 283.6 393 282.6 394.5 281.5 C397 279 399.6 279.4 402.2 277.5 C404.6 275.4 407.2 275.6 409.9 273.8 C412.8 271.4 415.8 271.4 418.7 269.4 C421 267.8 423.2 267.6 425.3 266.1 C427.2 264.2 428.6 262.6 430.8 261.7" stroke-width="4.3"/>
<path d="M430.8 261.7 C433 260.2 435.6 260.8 437.4 259.5 C439.4 258 440 256.4 441.8 255.1 C443.8 253.6 445.4 252.4 447.2 250.7 C449 248.8 450.8 247 452.7 245.3 C454.2 244 455.6 243 457.1 242" stroke-width="3.3"/>
</g>
<path d="M457.1 242 C459.6 240 462 238.6 464.8 237.1 C467.8 235.4 470.6 234.4 473.6 233.6 C476.6 232.2 479.4 230.6 482.4 231 C485 230.8 487.4 231.8 487.9 233.6 C488.2 235.4 487 236.8 485.7 237.4" fill="none" stroke="#1224cc" stroke-width="6.6" stroke-linecap="round" stroke-linejoin="round" filter="url(#bl)"/>
<path d="M455 243.6 C457 242.2 458.8 240.8 460.6 239.6" fill="none" stroke="url(#vs)" stroke-width="3.6" stroke-linecap="round"/>
<ellipse cx="376.8" cy="297.6" rx="6.4" ry="3.8" transform="rotate(32 376.8 297.6)" fill="none" stroke="#22c254" stroke-width="2.7"/>
<path d="M371.8 301.2 C372.6 298 375 296.2 378.8 294.6" fill="none" stroke="#f22c18" stroke-width="4.6" stroke-linecap="round"/>
<ellipse cx="425.6" cy="266.4" rx="7.2" ry="2.1" transform="rotate(60 425.6 266.4)" fill="none" stroke="#9cbca6" stroke-width="1.7"/>
<ellipse cx="425.9" cy="266.2" rx="7.2" ry="1.5" transform="rotate(60 425.9 266.2)" fill="none" stroke="#e0ece0" stroke-width="0.6"/>
<path d="M391.2 276.7L398.9 288.1" stroke="#8c1f6c" stroke-width="1.1"/>
<g stroke="#bdbdbd" stroke-width="0.7" fill="none">
<path d="M528 235.8H535.2V319.2H528"/>
<path d="M530.2 243.9H534.8M530.2 252.2H534.8M530.2 260.5H534.8M530.2 268.8H534.8M530.2 277.1H534.8M530.2 285.4H534.8M530.2 293.7H534.8M530.2 302H534.8M530.2 310.3H534.8"/>
</g>
<g stroke="#c4c4c4" stroke-width="0.8" fill="none">
<rect x="525.6" y="341.8" width="11.6" height="11.2"/>
<path d="M525.6 341.8L522.4 337.2H534.4L537.2 341.8M522.4 337.2V348.6L525.6 353"/>
</g>
<text x="531.4" y="351" font-family="Liberation Sans, sans-serif" font-size="8.6" fill="#e0e0e0" text-anchor="middle">L</text>
</svg>
<span class="t k" style="top:350px;font-size:8.15px;color:#f4f4f4;left:288.80px;width:300px;text-align:center;">Vessel QFR: 0.41</span>
<span class="t k" style="top:359px;font-size:8.15px;color:#f4f4f4;left:288.80px;width:300px;text-align:center;">Index QFR: 0.68</span>
<div class="a" style="left:314.60px;top:368.10px;width:233.50px;height:0.80px;background:#9a9a9a;"></div>
<div class="a" style="left:313.40px;top:368.90px;width:235.90px;height:4.00px;background:#ffffff;"></div>
<span class="t k" style="top:372px;font-size:8.3px;color:#303030;left:314.80px;">3D Reconstruction with QFR</span>
<span class="t k" style="top:372px;font-size:8.3px;color:#303030;left:557.60px;">Diameter and QFR Diagrams</span>
<div class="a" style="left:557.50px;top:184.60px;width:233.30px;height:184.30px;background:#9a9a9a;"></div>
<div class="a" style="left:558.30px;top:185.40px;width:231.70px;height:182.70px;background:#000000;"></div>
<svg style="left:558.3px;top:185.4px" width="231.70000000000005" height="182.70000000000002" viewBox="558.3 185.4 231.70000000000005 182.70000000000002"><rect x="582.7" y="193.4" width="178.0999999999999" height="61.099999999999994" fill="#3a3a3a"/><rect x="586.9" y="283.6" width="173.30000000000007" height="59.599999999999966" fill="#3a3a3a"/><path d="M586.9 331.3H760.2" stroke="#b4b4b4" stroke-width="0.6" stroke-dasharray="1 1"/><path d="M586.9 319.4H760.2" stroke="#b4b4b4" stroke-width="0.6" stroke-dasharray="1 1"/><path d="M586.9 307.4H760.2" stroke="#b4b4b4" stroke-width="0.6" stroke-dasharray="1 1"/><path d="M586.9 295.5H760.2" stroke="#b4b4b4" stroke-width="0.6" stroke-dasharray="1 1"/><path d="M586.9 283.6H760.2" stroke="#b4b4b4" stroke-width="0.6" stroke-dasharray="1 1"/><path d="M604.2 283.6V343.2" stroke="#4c4c4c" stroke-width="0.5"/><path d="M621.6 283.6V343.2" stroke="#4c4c4c" stroke-width="0.5"/><path d="M638.9 283.6V343.2" stroke="#4c4c4c" stroke-width="0.5"/><path d="M656.2 283.6V343.2" stroke="#4c4c4c" stroke-width="0.5"/><path d="M673.5 283.6V343.2" stroke="#4c4c4c" stroke-width="0.5"/><path d="M690.9 283.6V343.2" stroke="#4c4c4c" stroke-width="0.5"/><path d="M708.2 283.6V343.2" stroke="#4c4c4c" stroke-width="0.5"/><path d="M725.5 283.6V343.2" stroke="#4c4c4c" stroke-width="0.5"/><path d="M742.9 283.6V343.2" stroke="#4c4c4c" stroke-width="0.5"/><path d="M582.7 193.4V256.0M581.2 254.5H760.8" stroke="#e0e0e0" stroke-width="0.7" fill="none"/><path d="M586.9 283.6V344.7M585.4 343.2H760.2" stroke="#e0e0e0" stroke-width="0.7" fill="none"/><path d="M580.5 254.5H582.7M581.5 252.5H582.7M581.5 250.4H582.7M581.5 248.4H582.7M581.5 246.4H582.7M580.5 244.3H582.7M581.5 242.3H582.7M581.5 240.2H582.7M581.5 238.2H582.7M581.5 236.2H582.7M580.5 234.1H582.7M581.5 232.1H582.7M581.5 230.1H582.7M581.5 228.0H582.7M581.5 226.0H582.7M580.5 223.9H582.7M581.5 221.9H582.7M581.5 219.9H582.7M581.5 217.8H582.7M581.5 215.8H582.7M580.5 213.8H582.7M581.5 211.7H582.7M581.5 209.7H582.7M581.5 207.7H582.7M581.5 205.6H582.7M580.5 203.6H582.7M581.5 201.5H582.7M581.5 199.5H582.7M581.5 197.5H582.7M581.5 195.4H582.7M580.5 193.4H582.7M582.7 254.5V256.7M586.3 254.5V255.7M589.8 254.5V255.7M593.4 254.5V255.7M596.9 254.5V255.7M600.5 254.5V255.7M604.1 254.5V255.7M607.6 254.5V255.7M611.2 254.5V255.7M614.8 254.5V255.7M618.3 254.5V256.7M621.9 254.5V255.7M625.4 254.5V255.7M629.0 254.5V255.7M632.6 254.5V255.7M636.1 254.5V255.7M639.7 254.5V255.7M643.3 254.5V255.7M646.8 254.5V255.7M650.4 254.5V255.7M653.9 254.5V256.7M657.5 254.5V255.7M661.1 254.5V255.7M664.6 254.5V255.7M668.2 254.5V255.7M671.8 254.5V255.7M675.3 254.5V255.7M678.9 254.5V255.7M682.4 254.5V255.7M686.0 254.5V255.7M689.6 254.5V256.7M693.1 254.5V255.7M696.7 254.5V255.7M700.2 254.5V255.7M703.8 254.5V255.7M707.4 254.5V255.7M710.9 254.5V255.7M714.5 254.5V255.7M718.1 254.5V255.7M721.6 254.5V255.7M725.2 254.5V256.7M728.7 254.5V255.7M732.3 254.5V255.7M735.9 254.5V255.7M739.4 254.5V255.7M743.0 254.5V255.7M746.6 254.5V255.7M750.1 254.5V255.7M753.7 254.5V255.7M757.2 254.5V255.7M760.8 254.5V256.7M584.7 343.2H586.9M585.7 340.8H586.9M585.7 338.4H586.9M585.7 336.0H586.9M585.7 333.7H586.9M584.7 331.3H586.9M585.7 328.9H586.9M585.7 326.5H586.9M585.7 324.1H586.9M585.7 321.7H586.9M584.7 319.4H586.9M585.7 317.0H586.9M585.7 314.6H586.9M585.7 312.2H586.9M585.7 309.8H586.9M584.7 307.4H586.9M585.7 305.1H586.9M585.7 302.7H586.9M585.7 300.3H586.9M585.7 297.9H586.9M584.7 295.5H586.9M585.7 293.1H586.9M585.7 290.8H586.9M585.7 288.4H586.9M585.7 286.0H586.9M584.7 283.6H586.9M586.9 343.2V345.4M590.4 343.2V344.4M593.8 343.2V344.4M597.3 343.2V344.4M600.8 343.2V344.4M604.2 343.2V344.4M607.7 343.2V344.4M611.2 343.2V344.4M614.6 343.2V344.4M618.1 343.2V344.4M621.6 343.2V345.4M625.0 343.2V344.4M628.5 343.2V344.4M632.0 343.2V344.4M635.4 343.2V344.4M638.9 343.2V344.4M642.4 343.2V344.4M645.8 343.2V344.4M649.3 343.2V344.4M652.8 343.2V344.4M656.2 343.2V345.4M659.7 343.2V344.4M663.2 343.2V344.4M666.6 343.2V344.4M670.1 343.2V344.4M673.5 343.2V344.4M677.0 343.2V344.4M680.5 343.2V344.4M683.9 343.2V344.4M687.4 343.2V344.4M690.9 343.2V345.4M694.3 343.2V344.4M697.8 343.2V344.4M701.3 343.2V344.4M704.7 343.2V344.4M708.2 343.2V344.4M711.7 343.2V344.4M715.1 343.2V344.4M718.6 343.2V344.4M722.1 343.2V344.4M725.5 343.2V345.4M729.0 343.2V344.4M732.5 343.2V344.4M735.9 343.2V344.4M739.4 343.2V344.4M742.9 343.2V344.4M746.3 343.2V344.4M749.8 343.2V344.4M753.3 343.2V344.4M756.7 343.2V344.4M760.2 343.2V345.4" stroke="#d8d8d8" stroke-width="0.5" fill="none"/><g font-family="Liberation Sans, sans-serif" font-size="5.3" font-weight="bold" fill="#d4d4d4"><text x="579.5" y="256.2" text-anchor="end">0</text><text x="579.5" y="246.0" text-anchor="end">1</text><text x="579.5" y="235.8" text-anchor="end">2</text><text x="579.5" y="225.6" text-anchor="end">3</text><text x="579.5" y="215.5" text-anchor="end">4</text><text x="579.5" y="205.3" text-anchor="end">5</text><text x="579.5" y="195.1" text-anchor="end">6</text><text x="582.7" y="264.1" text-anchor="middle">0</text><text x="586.9" y="353.4" text-anchor="middle">0</text><text x="618.3" y="264.1" text-anchor="middle">20</text><text x="621.6" y="353.4" text-anchor="middle">20</text><text x="653.9" y="264.1" text-anchor="middle">40</text><text x="656.2" y="353.4" text-anchor="middle">40</text><text x="689.6" y="264.1" text-anchor="middle">60</text><text x="690.9" y="353.4" text-anchor="middle">60</text><text x="725.2" y="264.1" text-anchor="middle">80</text><text x="725.5" y="353.4" text-anchor="middle">80</text><text x="760.8" y="264.1" text-anchor="middle">100</text><text x="760.2" y="353.4" text-anchor="middle">100</text><text x="583.6999999999999" y="344.9" text-anchor="end">0</text><text x="583.6999999999999" y="333.0" text-anchor="end">0,2</text><text x="583.6999999999999" y="321.1" text-anchor="end">0,4</text><text x="583.6999999999999" y="309.1" text-anchor="end">0,6</text><text x="583.6999999999999" y="297.2" text-anchor="end">0,8</text><text x="583.6999999999999" y="285.3" text-anchor="end">1</text></g><g font-family="Liberation Sans, sans-serif" font-size="7.1" font-weight="bold" fill="#f4f4f4" text-anchor="middle"><text x="671.4" y="272.6">position (mm)</text><text x="673" y="362.9">position (mm)</text><text transform="translate(569.8 224) rotate(-90)">diameter (mm)</text><text transform="translate(572.2 313) rotate(-90)">Contrast QFR</text></g><path d="M582.7 203.3 L584.1 203.1 L585.5 202.0 L587.0 205.7 L588.4 211.3 L589.8 218.3 L591.2 220.6 L592.7 216.9 L594.1 212.8 L595.5 212.9 L596.9 211.5 L598.4 213.3 L599.8 220.2 L601.2 221.7 L602.6 224.5 L604.1 221.8 L605.5 221.2 L606.9 219.0 L608.3 218.0 L609.8 218.3 L611.2 219.0 L612.6 222.0 L614.0 223.1 L615.5 222.1 L616.9 224.7 L618.3 226.8 L619.7 230.5 L621.2 233.8 L622.6 237.7 L624.0 241.6 L625.4 235.2 L626.9 234.1 L628.3 233.7 L629.7 232.9 L631.1 232.5 L632.6 237.2 L634.0 237.7 L635.4 234.7 L636.8 233.7 L638.3 234.7 L639.7 233.9 L641.1 233.8 L642.5 232.8 L644.0 230.8 L645.4 230.2 L646.8 227.4 L648.2 231.8 L649.7 228.3 L651.1 225.7 L652.5 226.0 L653.9 224.6 L655.4 224.0 L656.8 226.5 L658.2 227.2 L659.6 228.2 L661.1 231.8 L662.5 231.9 L663.9 231.7 L665.3 233.6 L666.8 234.8 L668.2 233.6 L669.6 235.2 L671.0 237.6 L672.5 238.7 L673.9 240.7 L675.3 241.9 L676.7 243.4 L678.2 245.6 L679.6 244.7 L681.0 241.6 L682.4 238.9 L683.9 238.2 L685.3 237.1 L686.7 233.3 L688.1 233.3 L689.6 233.1 L691.0 231.0 L692.4 228.9 L693.8 228.7 L695.3 228.3 L696.7 228.1 L698.1 227.5 L699.5 228.0 L701.0 230.4 L702.4 230.4 L703.8 230.0 L705.2 230.5 L706.7 227.5 L708.1 223.3 L709.5 223.0 L710.9 224.3 L712.4 225.6 L713.8 226.7 L715.2 229.5 L716.6 227.9 L718.1 226.8 L719.5 228.5 L720.9 231.2 L722.3 232.1 L723.8 231.6 L725.2 231.9" fill="none" stroke="#4a90d8" stroke-width="0.65"/><path d="M582.7 203.6 L584.1 203.2 L585.5 202.8 L587.0 205.6 L588.4 211.6 L589.8 218.8 L591.2 221.0 L592.7 222.6 L594.1 219.6 L595.5 218.9 L596.9 218.6 L598.4 219.5 L599.8 220.0 L601.2 221.9 L602.6 224.4 L604.1 222.9 L605.5 221.9 L606.9 219.4 L608.3 217.9 L609.8 218.4 L611.2 219.5 L612.6 222.7 L614.0 223.3 L615.5 223.0 L616.9 225.3 L618.3 228.0 L619.7 230.8 L621.2 233.8 L622.6 238.7 L624.0 242.1 L625.4 242.8 L626.9 241.6 L628.3 240.8 L629.7 240.4 L631.1 239.9 L632.6 238.5 L634.0 238.5 L635.4 239.8 L636.8 239.3 L638.3 239.2 L639.7 239.0 L641.1 238.6 L642.5 237.0 L644.0 236.0 L645.4 234.7 L646.8 232.9 L648.2 232.3 L649.7 229.4 L651.1 226.8 L652.5 226.4 L653.9 225.8 L655.4 224.0 L656.8 226.6 L658.2 227.7 L659.6 228.4 L661.1 232.2 L662.5 233.8 L663.9 233.7 L665.3 235.5 L666.8 235.9 L668.2 235.8 L669.6 236.2 L671.0 238.0 L672.5 239.5 L673.9 240.6 L675.3 241.9 L676.7 243.2 L678.2 245.6 L679.6 245.0 L681.0 242.7 L682.4 239.0 L683.9 238.6 L685.3 237.1 L686.7 234.6 L688.1 233.8 L689.6 233.0 L691.0 231.2 L692.4 228.9 L693.8 229.9 L695.3 228.4 L696.7 227.9 L698.1 228.8 L699.5 228.8 L701.0 230.8 L702.4 231.4 L703.8 231.0 L705.2 230.6 L706.7 228.8 L708.1 228.0 L709.5 227.7 L710.9 228.6 L712.4 229.2 L713.8 230.7 L715.2 230.4 L716.6 228.4 L718.1 228.1 L719.5 228.8 L720.9 231.3 L722.3 232.2 L723.8 232.3 L725.2 233.1" fill="none" stroke="#e8e0a8" stroke-width="0.7"/><path d="M582.7 217.8L725.2 230.6" stroke="#d02030" stroke-width="0.7"/><path d="M586.9 283.6 L625.0 283.6 L628.5 287.8 L632.0 293.1 L635.4 297.3 L642.4 299.1 L649.3 300.9 L656.2 302.1 L659.7 303.3 L664.9 303.9 L670.1 307.4 L675.3 309.8 L680.5 311.6 L683.9 313.4 L689.1 315.8 L694.3 317.6 L697.8 318.8 L725.5 318.8" fill="none" stroke="#cccc6c" stroke-width="0.8"/><path d="M656.2 193.4V254.5" stroke="#3aa862" stroke-width="0.9"/><path d="M656.2 249.5H659.6L658.4000000000001 251.1L659.2 252.9H656.2Z" fill="#3aa862"/><path d="M678.6 193.4V254.5" stroke="#b42a5c" stroke-width="0.9"/><path d="M678.6 249.5H682.0L680.8000000000001 251.1L681.6 252.9H678.6Z" fill="#b42a5c"/><path d="M694.9 193.4V254.5" stroke="#3aa862" stroke-width="0.9"/><path d="M694.9 249.5H698.3L697.1 251.1L697.9 252.9H694.9Z" fill="#3aa862"/><path d="M657.9 283.6V343.2" stroke="#3aa862" stroke-width="0.9"/><path d="M657.9 338.2H661.3L660.1 339.8L660.9 341.59999999999997H657.9Z" fill="#3aa862"/><path d="M680 283.6V343.2" stroke="#b42a5c" stroke-width="0.9"/><path d="M680 338.2H683.4L682.2 339.8L683 341.59999999999997H680Z" fill="#b42a5c"/><path d="M695.6 283.6V343.2" stroke="#3aa862" stroke-width="0.9"/><path d="M695.6 338.2H699.0L697.8000000000001 339.8L698.6 341.59999999999997H695.6Z" fill="#3aa862"/><g font-family="Liberation Sans, sans-serif" font-size="5.2" font-weight="bold" fill="#ececec"><rect x="766.9" y="194.70000000000002" width="3.4" height="3.4" fill="#f0e89a"/><text x="772.2" y="198.3">Min.</text><rect x="766.9" y="205.70000000000002" width="3.4" height="3.4" fill="#4a90d8"/><text x="772.2" y="209.3">Max.</text><rect x="766.9" y="216.70000000000002" width="3.4" height="3.4" fill="#d02030"/><text x="772.2" y="220.3">Ref.</text><rect x="766.9" y="285.3" width="3.4" height="3.4" fill="#e0e078"/><text x="772.2" y="288.9">QFR</text></g></svg>
<span class="t kb" style="top:386px;font-size:8.9px;color:#1c1c1c;left:315.20px;font-weight:bold;">Frame Count</span>
<div class="a" style="left:314px;top:398.9px;width:477.20000000000005px;height:22.5px;border:0.8px solid #dcdcdc;box-sizing:border-box"></div>
<span class="t k" style="top:399px;font-size:8.3px;color:#303030;left:316.90px;">Start Frame:</span>
<span class="t k" style="top:399px;font-size:8.3px;color:#303030;left:372.20px;">7.0</span>
<span class="t k" style="top:410px;font-size:8.3px;color:#303030;left:316.90px;">End Frame:</span>
<span class="t k" style="top:410px;font-size:8.3px;color:#303030;left:367.20px;">15.0</span>
<span class="t kb" style="top:424px;font-size:8.9px;color:#1c1c1c;left:315.20px;font-weight:bold;">QFR Results</span>
<div class="a" style="left:314px;top:438.2px;width:477.20000000000005px;height:64.30000000000001px;border:0.8px solid #dcdcdc;box-sizing:border-box"></div>
<span class="t k" style="top:438px;font-size:8.3px;color:#303030;left:369.20px;">Fixed Flow</span>
<span class="t k" style="top:438px;font-size:8.3px;color:#303030;left:412.50px;">Contrast</span>
<span class="t k" style="top:449px;font-size:8.3px;color:#303030;left:316.90px;">Vessel QFR</span>
<span class="t k" style="top:449px;font-size:8.3px;color:#303030;right:626.30px;">0.35</span>
<span class="t k" style="top:449px;font-size:8.3px;color:#303030;right:588.40px;">0.41</span>
<span class="t k" style="top:459px;font-size:8.3px;color:#303030;left:316.90px;">Lesion QFR</span>
<span class="t k" style="top:459px;font-size:8.3px;color:#303030;right:626.30px;">0.72</span>
<span class="t k" style="top:459px;font-size:8.3px;color:#303030;right:588.40px;">0.75</span>
<span class="t k" style="top:470px;font-size:8.3px;color:#303030;left:316.90px;">Index QFR</span>
<span class="t k" style="top:470px;font-size:8.3px;color:#303030;right:626.30px;">0.64</span>
<span class="t k" style="top:470px;font-size:8.3px;color:#303030;right:588.40px;">0.68</span>
<span class="t k" style="top:480px;font-size:8.3px;color:#303030;left:316.90px;">Resistance</span>
<span class="t k" style="top:480px;font-size:8.3px;color:#303030;right:583.00px;">336.02</span>
<span class="t k" style="top:480px;font-size:8.3px;color:#303030;left:446.40px;">mmHg*s/m</span>
<span class="t k" style="top:491px;font-size:8.3px;color:#303030;left:316.90px;">Flow Velocity</span>
<span class="t k" style="top:491px;font-size:8.3px;color:#303030;right:588.40px;">0.15</span>
<span class="t k" style="top:491px;font-size:8.3px;color:#303030;left:446.40px;">m/s</span>
<div class="a" style="left:315.30px;top:505.60px;width:448.70px;height:10.00px;background:#90c0f8;"></div>
<span class="t kb" style="top:505px;font-size:8.7px;color:#0d2240;left:315.60px;font-weight:bold;">Conclusions</span>
<div class="a" style="left:766.8px;top:505.2px;width:24.4px;height:10.4px;border:0.7px solid #bdbdbd;border-radius:1.4px;box-sizing:border-box;background:#fbfbfb"></div>
<span class="t k" style="top:506px;font-size:7.8px;color:#222;left:628.90px;width:300px;text-align:center;">Edit</span>
<div class="a" style="left:875.20px;top:73.60px;width:7.60px;height:472.40px;background:#383838;"></div>
<div class="a" style="left:875.60px;top:364.40px;width:6.80px;height:149.80px;background:#454545;"></div>
<svg style="left:876.9px;top:78.8px" width="5" height="4"><path d="M0 2.4L1.8 0L3.6 2.4Z" fill="#e0e0e0"/></svg>
<svg style="left:876.9px;top:540.8px" width="5" height="4"><path d="M0 0L1.8 2.4L3.6 0Z" fill="#e0e0e0"/></svg>
<div class="a" style="left:886.60px;top:301.00px;width:0.80px;height:1.10px;background:#6e6e6e;"></div>
<div class="a" style="left:886.60px;top:303.20px;width:0.80px;height:1.10px;background:#6e6e6e;"></div>
<div class="a" style="left:886.60px;top:305.40px;width:0.80px;height:1.10px;background:#6e6e6e;"></div>
<div class="a" style="left:886.60px;top:307.60px;width:0.80px;height:1.10px;background:#6e6e6e;"></div>
<div class="a" style="left:886.60px;top:309.80px;width:0.80px;height:1.10px;background:#6e6e6e;"></div>
<div class="a" style="left:888.20px;top:76.00px;width:119.80px;height:472.60px;background:#525252;"></div>
<div class="a" style="left:888.20px;top:76.00px;width:119.80px;height:12.70px;background:#95c6fa;"></div>
<span class="t kb" style="top:77px;font-size:7.3px;color:#0d2240;left:891.00px;font-weight:bold;">Report</span>
<div class="a" style="left:888.20px;top:175.70px;width:119.80px;height:12.30px;background:#95c6fa;"></div>
<span class="t kb" style="top:177px;font-size:7.3px;color:#0d2240;left:891.00px;font-weight:bold;">Snapshots</span>
<div class="a" style="left:892.50px;top:93.40px;width:79.70px;height:78.20px;background:#545454;border:1.4px solid #f4f4f4;box-sizing:border-box;"></div>
<div class="a" style="left:904.20px;top:94.40px;width:55.60px;height:76.20px;background:#ffffff;"></div>
<svg style="left:904.2px;top:94.2px" width="55.6" height="76.8" viewBox="0 0 56 77.4">
<g fill="#9aa8b8"><rect x="12" y="2.4" width="22" height="0.7"/><rect x="12" y="4" width="18" height="0.7"/><rect x="12" y="5.6" width="20" height="0.7"/></g>
<circle cx="48.5" cy="4.4" r="2.6" fill="#3a78c0"/><circle cx="45.4" cy="5.6" r="1.6" fill="#6aa0d8"/>
<rect x="1" y="8.6" width="54" height="0.8" fill="#3a78c0"/>
<g fill="#8a8a8a"><rect x="1.4" y="11" width="8" height="0.6"/><rect x="14" y="11" width="7" height="0.6"/><rect x="30" y="11" width="6" height="0.6"/><rect x="41" y="11" width="9" height="0.6"/>
<rect x="1.4" y="13" width="6" height="0.6"/><rect x="14" y="13" width="9" height="0.6"/><rect x="30" y="13" width="8" height="0.6"/><rect x="41" y="13" width="7" height="0.6"/>
<rect x="1.4" y="15" width="7" height="0.6"/><rect x="14" y="15" width="6" height="0.6"/><rect x="30" y="15" width="7" height="0.6"/><rect x="41" y="15" width="8" height="0.6"/>
<rect x="1.4" y="17" width="5" height="0.6"/><rect x="14" y="17" width="8" height="0.6"/><rect x="30" y="17" width="5" height="0.6"/><rect x="41" y="17" width="6" height="0.6"/>
<rect x="1.4" y="19" width="7" height="0.6"/><rect x="14" y="19" width="5" height="0.6"/><rect x="30" y="19" width="7" height="0.6"/></g>
<rect x="1" y="21.6" width="54" height="0.8" fill="#7ab0e8"/>
<rect x="1" y="26.4" width="25.8" height="14.4" fill="#2e2e2e"/><path d="M3 31C8 28 14 29 24 36" stroke="#6e6e6e" stroke-width="2.4" fill="none" opacity="0.7"/><path d="M5 29C10 29 15 31 19 35" stroke="#141414" stroke-width="0.7" fill="none"/>
<rect x="28.8" y="26.4" width="25.8" height="14.4" fill="#3a3a3a"/><rect x="28.8" y="26.4" width="4" height="14.4" fill="#141414"/><path d="M38 29C42 30 47 33 53 38" stroke="#7a7a7a" stroke-width="3" fill="none" opacity="0.6"/><path d="M39 28C41 31 42 35 40 40" stroke="#161616" stroke-width="0.7" fill="none"/>
<rect x="1" y="42.8" width="25.8" height="14.4" fill="#0a0a0a"/><path d="M8 54.6C9 52 12 51 15 49.6C17 48.6 19 47.6 20.4 47.6" stroke="#c8b0a8" stroke-width="0.8" fill="none"/>
<rect x="28.8" y="42.8" width="25.8" height="14.4" fill="#0a0a0a"/><rect x="31" y="44.4" width="19" height="5.4" fill="#2c2c2c"/><rect x="31" y="51" width="19" height="4.6" fill="#1c1c1c"/>
</svg>
<div class="a" style="left:892.40px;top:192.40px;width:79.70px;height:356.20px;background:#4b4b4b;"></div>
<div class="a" style="left:892.40px;top:192.40px;width:79.70px;height:78.40px;background:#5d5d5d;"></div>
<div class="a" style="left:892.40px;top:275.10px;width:79.70px;height:78.40px;background:#5d5d5d;"></div>
<div class="a" style="left:892.40px;top:357.80px;width:79.70px;height:78.40px;background:#5d5d5d;"></div>
<div class="a" style="left:892.40px;top:440.50px;width:79.70px;height:78.40px;background:#5d5d5d;"></div>
<div class="a" style="left:892.40px;top:523.20px;width:79.70px;height:25.40px;background:#5d5d5d;"></div>
<svg style="left:894.5px;top:200.8px" width="75.10000000000002" height="61.8" viewBox="0 0 75 61.8">
<defs><linearGradient id="s1" x1="0" y1="0" x2="1" y2="0.5"><stop offset="0" stop-color="#505050"/><stop offset="0.45" stop-color="#6c6c6c"/><stop offset="1" stop-color="#929292"/></linearGradient>
<linearGradient id="s1b" x1="0.2" y1="1" x2="0.8" y2="0"><stop offset="0.3" stop-color="#b0b0b0" stop-opacity="0"/><stop offset="0.5" stop-color="#b0b0b0" stop-opacity="0.35"/><stop offset="0.75" stop-color="#b0b0b0" stop-opacity="0"/></linearGradient>
<filter id="sb" x="-10%" y="-10%" width="120%" height="120%"><feGaussianBlur stdDeviation="0.45"/></filter><filter id="sb2" x="-30%" y="-30%" width="160%" height="160%"><feGaussianBlur stdDeviation="3"/></filter></defs>
<rect width="75" height="61.8" fill="url(#s1)"/><rect width="75" height="61.8" fill="url(#s1b)"/>
<rect x="56" y="0" width="19" height="20" fill="#c0c0c0" opacity="0.3" filter="url(#sb2)"/>
<rect x="0" y="0" width="5" height="61.8" fill="#343434"/>
<g fill="none" stroke="#2a2a2a" stroke-linecap="round" stroke-linejoin="round" filter="url(#sb)" opacity="0.9">
<path d="M5.7 18.5C6.5 15 7.4 13 8.5 11.4C9.8 9 11 7.4 12.8 6.6" stroke-width="2.2"/>
<path d="M12.8 6.6C17 7.4 21 7.2 25.6 7.7C29.6 8 33.6 8.8 37 10" stroke-width="1.4"/>
<path d="M37 10C41 12 45 14.4 48.4 17.1C52.4 20 56.2 22.8 59.8 25.6C64 28.8 68.4 31.6 72.6 34.2" stroke-width="1"/>
<path d="M42.7 14.2C44.6 18 46 22.6 47 27C48.8 33 50.8 38.8 52.7 44.2C54.6 49 56.6 53.8 58.4 58.4" stroke-width="0.9"/>
<path d="M25.6 7.7C28.4 5 31.4 3 34.2 1.4M34.2 1.4C39 2 43.8 3 48.4 4.3C57 7 66 11 74 15.7" stroke-width="0.7" opacity="0.8"/>
<path d="M30 8.4C33 14 35 21 36 28" stroke-width="0.6" opacity="0.55"/>
<path d="M52 20C56 21 62 21 68 19" stroke-width="0.6" opacity="0.55"/>
</g></svg>
<svg style="left:894.5px;top:283.5px" width="75.10000000000002" height="61.4" viewBox="0 0 75 61.4">
<defs><radialGradient id="s2" cx="0.65" cy="0.6" r="0.75"><stop offset="0" stop-color="#bebebe"/><stop offset="0.55" stop-color="#a0a0a0"/><stop offset="1" stop-color="#747474"/></radialGradient></defs>
<rect width="75" height="61.4" fill="url(#s2)"/>
<rect x="0" y="0" width="12" height="61.4" fill="#2e2e2e"/>
<g fill="none" stroke="#303030" stroke-linecap="round" stroke-linejoin="round" filter="url(#sb)" opacity="0.88">
<path d="M12.8 21.4C18 19.6 23.4 18.4 28.5 17.1C31.4 16 33.6 14.6 35.6 12.8" stroke-width="1"/>
<circle cx="35.8" cy="7.6" r="2.2" fill="#1c1c1c" stroke-width="1"/>
<path d="M36 10C37 11 37.6 11.4 38.5 11.4C42 10.6 45.2 9.4 48.4 8.5C53 8.4 58 9 62.7 10C65.8 11 68.6 12.4 71.2 14.2" stroke-width="0.9"/>
<path d="M38.5 11.4C39.6 12.8 40.4 14.2 41.3 15.7C42.6 18.4 43.6 21.2 44.2 24.2C43.4 28.2 41.8 32 39.9 35.6C38 39.4 36 43.2 34.2 47C33 51.2 32 55.6 31.3 59.8" stroke-width="1.2"/>
<path d="M44 13C45.2 14.8 46.2 16.6 47 18.5C48.8 22.2 50.4 26 51.3 29.9C50.6 33.8 49.2 37.6 48.4 41.3C49.6 45.2 51.2 49 52.7 52.7" stroke-width="0.85"/>
<path d="M48.4 8.5C52 6 56 4.6 60 4M51.3 29.9C56 34 60 40 62 48" stroke-width="0.6" opacity="0.7"/>
</g></svg>
<svg style="left:894.5px;top:366.7px" width="75.10000000000002" height="59.8" viewBox="0 0 75 59.8">
<rect width="75" height="59.8" fill="#2b2b2b"/>
<path d="M16.3 49C16.6 45 17.4 41.4 18.8 38.3C20.6 35.6 23.4 34.6 25.9 33C30 30.2 34.4 28 38.3 25.2C42 22.6 45.4 19.6 49 17C51.6 15.6 54.4 15 57.2 15.3" fill="none" stroke="#cfcfcf" stroke-width="1.9" stroke-linecap="round" stroke-linejoin="round"/>
<path d="M72.4 17V44M71 17H72.4M71 20H72.4M71 23H72.4M71 26H72.4M71 29H72.4M71 32H72.4M71 35H72.4M71 38H72.4M71 41H72.4M71 44H72.4" stroke="#5c5c5c" stroke-width="0.5" fill="none"/>
<rect x="68.6" y="50.4" width="4.2" height="4.4" fill="none" stroke="#a8a8a8" stroke-width="0.7"/>
<rect x="70" y="51.8" width="1.4" height="1.8" fill="#a8a8a8"/>
</svg>
<svg style="left:894.5px;top:449.3px" width="75.10000000000002" height="60.4" viewBox="0 0 75 60.4">
<rect width="75" height="60.4" fill="#2b2b2b"/>
<rect x="4.8" y="1.1" width="62.6" height="21.4" fill="#565656"/>
<path d="M4.8 1.1V22.5H67.4" stroke="#a0a0a0" stroke-width="0.5" fill="none"/>
<path d="M6 3 L7.4 6.6 L9 9 L11 8 L13 11.4 L15 10 L17 13.6 L20 17 L23 18.6 L26 16 L29 13 L31 14.4 L34 18.4 L37 20 L40 16.4 L43 14.8 L46 15.4 L50 14.6 L54 15" fill="none" stroke="#7e7e7e" stroke-width="0.8"/>
<path d="M30.6 1.1V22.5M38.4 1.1V22.5M44.2 1.1V22.5" stroke="#6c6c6c" stroke-width="0.5"/>
<rect x="68.6" y="2.6" width="1.1" height="1.1" fill="#c0c0c0"/><rect x="68.6" y="6.2" width="1.1" height="1.1" fill="#909090"/><rect x="68.6" y="9.8" width="1.1" height="1.1" fill="#707070"/>
<rect x="70.4" y="2.8" width="3" height="0.8" fill="#a8a8a8"/><rect x="70.4" y="6.4" width="3" height="0.8" fill="#a8a8a8"/><rect x="70.4" y="10" width="3" height="0.8" fill="#a8a8a8"/>
<rect x="1.6" y="4" width="1.1" height="15" fill="#a0a0a0" opacity="0.8"/>
<g fill="#a8a8a8"><rect x="4.6" y="24.6" width="0.9" height="1"/><rect x="16.6" y="24.6" width="1.6" height="1"/><rect x="29.2" y="24.6" width="1.6" height="1"/><rect x="41.6" y="24.6" width="1.6" height="1"/><rect x="54.2" y="24.6" width="1.6" height="1"/><rect x="66" y="24.6" width="2.2" height="1"/></g>
<rect x="28.4" y="27" width="16.4" height="1.3" fill="#c4c4c4"/>
</svg>
<div class="a" style="left:894.50px;top:531.80px;width:75.10px;height:16.80px;background:#2b2b2b;"></div>
<span class="t" style="left:882px;width:100px;text-align:center;top:526px;font-size:2.9px;color:#e4e4e4;font-weight:bold">Contrast QFR</span>
<svg style="left:894.5px;top:543px" width="75.10000000000002" height="5" viewBox="0 0 75 5"><rect x="4" y="2.6" width="1.2" height="1.2" fill="#777"/><path d="M46 3.6C50 2 54 1.6 58 2" stroke="#444" stroke-width="1" fill="none"/><rect x="68" y="2.6" width="3" height="1" fill="#555"/></svg>
<div class="a" style="left:1008.00px;top:76.00px;width:6.40px;height:472.60px;background:#404040;"></div>
<div class="a" style="left:1009.00px;top:86.00px;width:4.60px;height:349.80px;background:#4c4c4c;"></div>
<svg style="left:1009.2px;top:78.4px" width="5" height="4"><path d="M0 3L2.2 0L4.4 3Z" fill="#ececec"/></svg>
<svg style="left:1009.2px;top:544.2px" width="5" height="4"><path d="M0 0L2.2 3L4.4 0Z" fill="#ececec"/></svg>
<div class="a" style="left:226.00px;top:555.20px;width:153.80px;height:13.80px;background:#393939;"></div>
<div class="a" style="left:264.60px;top:555.20px;width:0.80px;height:13.80px;background:#2f2f2f;"></div>
<div class="a" style="left:291.00px;top:555.20px;width:0.80px;height:13.80px;background:#2f2f2f;"></div>
<span class="t k" style="top:558px;font-size:6.5px;color:#e6e6e6;left:231.80px;">Browser</span>
<span class="t k" style="top:558px;font-size:6.5px;color:#e6e6e6;left:268.00px;">View</span>
<span class="t k" style="top:558px;font-size:6.8px;color:#e6e6e6;left:297.20px;">QAngio XA 3D 1.1 #1</span>
<svg style="left:365.6px;top:558.6px" width="7" height="7" viewBox="0 0 7 7"><path d="M1 6L3.2 3.8M2 2L5 5M2.8 2.8L4.6 1L6 2.4L4.2 4.2Z" stroke="#151515" stroke-width="0.9" fill="#151515"/></svg>
<div class="a" style="left:379.80px;top:554.40px;width:34.40px;height:14.60px;background:#4f4f4f;"></div>
<span class="t k" style="top:558px;font-size:6.5px;color:#f0f0f0;left:247.20px;width:300px;text-align:center;">Report</span>
</div>
</body></html>
